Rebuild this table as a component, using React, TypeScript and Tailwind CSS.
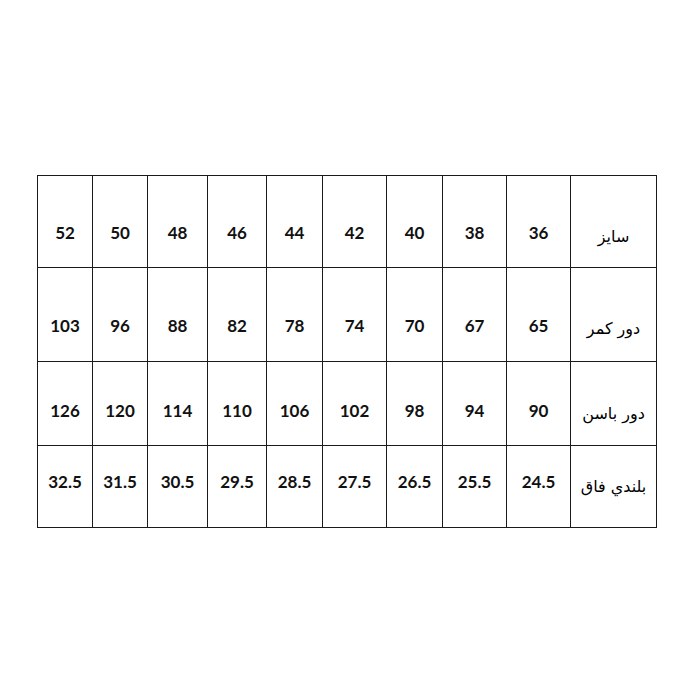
import React from "react";

type SizeRow = {
  label: string;
  values: string[];
  h: string;
  pad: string;
  labelPad: string;
};

// columns from right to left (label first)
const colWidths = [
  "w-[86px]",
  "w-[64px]",
  "w-[64px]",
  "w-[56px]",
  "w-[64px]",
  "w-[56px]",
  "w-[59px]",
  "w-[60px]",
  "w-[55px]",
  "w-[55px]",
];

const rows: SizeRow[] = [
  {
    label: "سایز",
    values: ["36", "38", "40", "42", "44", "46", "48", "50", "52"],
    h: "h-[92px]",
    pad: "pt-[23px]",
    labelPad: "pt-[31px]",
  },
  {
    label: "دور کمر",
    values: ["65", "67", "70", "74", "78", "82", "88", "96", "103"],
    h: "h-[94px]",
    pad: "pt-[23px]",
    labelPad: "pt-[29px]",
  },
  {
    label: "دور باسن",
    values: ["90", "94", "98", "102", "106", "110", "114", "120", "126"],
    h: "h-[84px]",
    pad: "pt-[15px]",
    labelPad: "pt-[21px]",
  },
  {
    label: "بلندي فاق",
    values: ["24.5", "25.5", "26.5", "27.5", "28.5", "29.5", "30.5", "31.5", "32.5"],
    h: "h-[82px]",
    pad: "pb-[9px]",
    labelPad: "pb-[0px]",
  },
];

const App = () => {
  return (
    <div className="w-[700px] h-[700px] bg-white pt-[175px] pl-[37px]">
      <div dir="rtl" className="flex flex-col w-[620px] border-t border-r border-[#1a1a1a]">
        {rows.map((row) => (
          <div key={row.label} className={`flex ${row.h}`}>
            <div
              className={`${colWidths[0]} h-full flex items-center justify-center border-l border-b border-[#1a1a1a] ${row.labelPad} text-[16px] text-black font-['DejaVu_Sans',sans-serif]`}
            >
              {row.label}
            </div>
            {row.values.map((v, i) => (
              <div
                key={`${row.label}-${v}`}
                className={`${colWidths[i + 1]} h-full flex items-center justify-center border-l border-b border-[#1a1a1a] ${row.pad} text-[17px] font-bold text-[#111] font-['Lato',sans-serif]`}
              >
                <span dir="ltr">{v}</span>
              </div>
            ))}
          </div>
        ))}
      </div>
    </div>
  );
};

export default App;
